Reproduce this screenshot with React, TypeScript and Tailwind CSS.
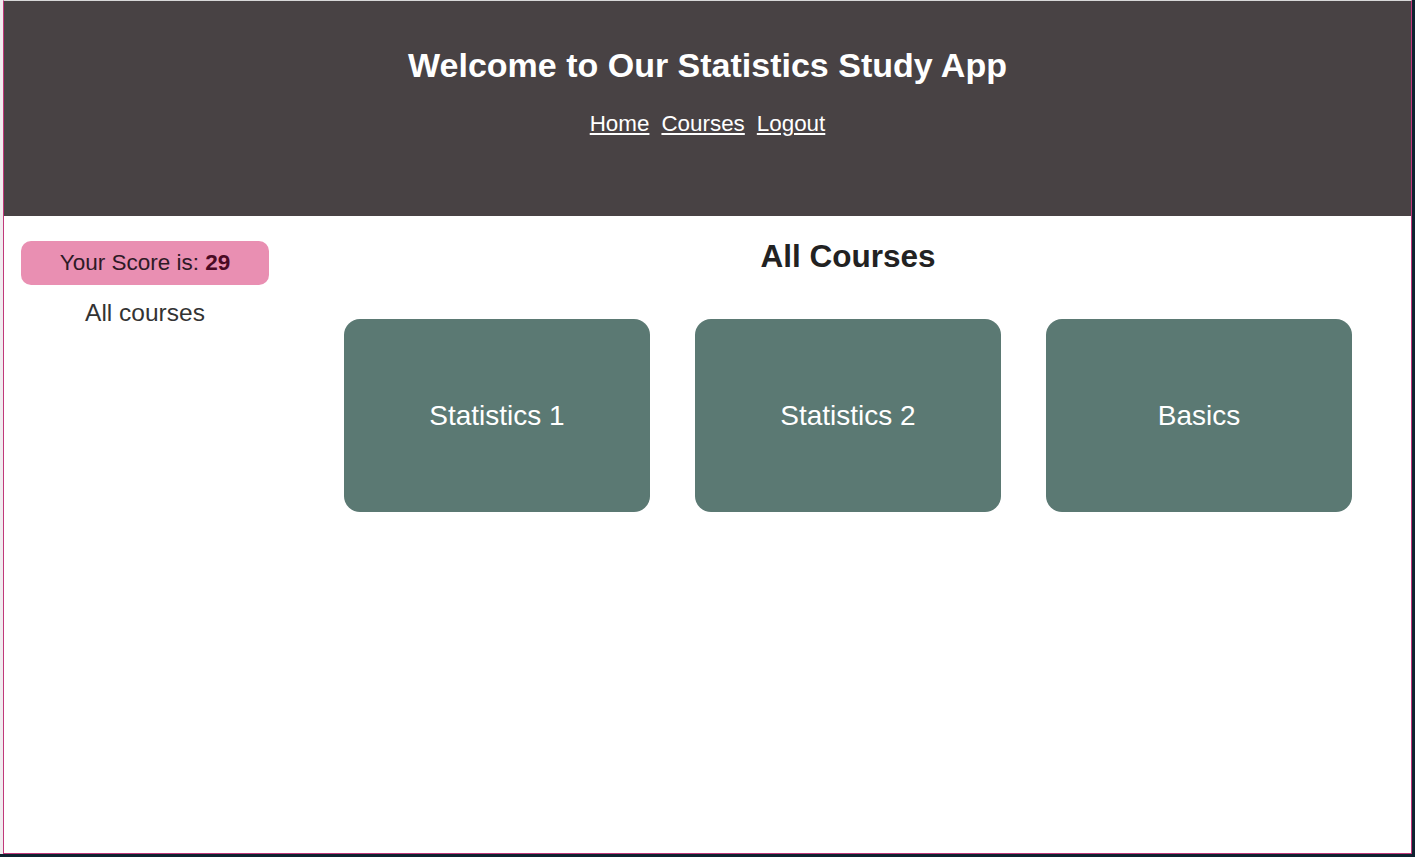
export default function App() {
  const courses = ["Statistics 1", "Statistics 2", "Basics"];

  return (
    <div
      className="w-[1415px] h-[857px] bg-[#0f2230] flex overflow-hidden"
      style={{ fontFamily: '"Liberation Sans", Arial, sans-serif' }}
    >
      {/* strip of the window behind */}
      <div className="w-[3px] h-[854px] bg-[#f1ecef]" />

      {/* Browser window */}
      <div className="w-[1409px] h-[854px] border border-[#c0397a] border-t-[#d8d8d8] bg-white flex flex-col">
        {/* Header */}
        <header className="h-[215px] bg-[#484244] flex flex-col items-center pt-[45px]">
          <h1 className="text-white font-bold text-[34px] leading-[39px]">
            Welcome to Our Statistics Study App
          </h1>
          <nav className="mt-[26px] flex gap-[12px] text-white text-[22.4px] leading-[25px]">
            <a href="#" className="underline underline-offset-[2px]">Home</a>
            <a href="#" className="underline underline-offset-[2px]">Courses</a>
            <a href="#" className="underline underline-offset-[2px]">Logout</a>
          </nav>
        </header>

        <div className="flex flex-1">
          {/* Sidebar */}
          <aside className="w-[281px] pl-[17px] pr-[16px] pt-[25px] flex flex-col items-center">
            <div className="w-full h-[44px] rounded-[10px] bg-[#e98fb2] flex items-center justify-center text-[22.5px] text-[#2e1a26]">
              <span>
                Your Score is: <b className="text-[#4a0a24]">29</b>
              </span>
            </div>
            <p className="mt-[14px] text-[24.5px] leading-[28px] text-[#333333]">All courses</p>
          </aside>

          {/* Main */}
          <main className="flex-1 px-[59px] pt-[22px]">
            <h2 className="text-center font-bold text-[31.5px] leading-[36px] text-[#222222]">All Courses</h2>
            <div className="mt-[45px] grid grid-cols-3 gap-[45px]">
              {courses.map((c) => (
                <div
                  key={c}
                  className="h-[193px] rounded-[16px] bg-[#5b7973] flex items-center justify-center text-white text-[28px]"
                >
                  {c}
                </div>
              ))}
            </div>
          </main>
        </div>
      </div>
    </div>
  );
}
